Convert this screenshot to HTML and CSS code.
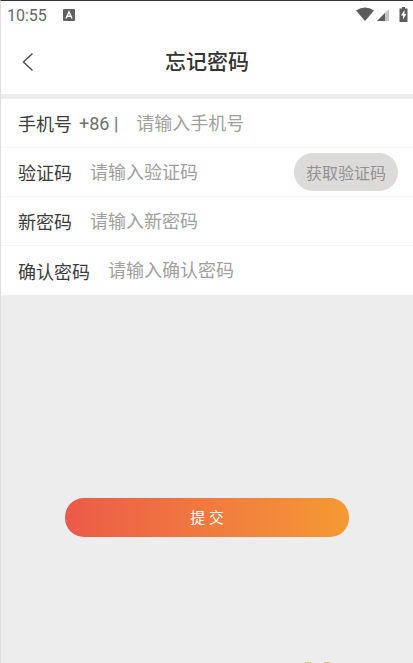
FILE: index.html
```html
<!DOCTYPE html>
<html lang="zh-CN">
<head>
<meta charset="utf-8">
<meta name="viewport" content="width=device-width, initial-scale=1">
<title>忘记密码</title>
<link rel="stylesheet" href="styles.css">
</head>
<body>
<div class="status">
  <span class="clock">10:55</span>
  <svg class="badge" width="12" height="12" viewBox="0 0 12 12" aria-hidden="true"><rect width="12" height="12" rx="1" fill="#616161"/><path d="M3 9.500 6 2.800 9 9.500M4.200 7.200H7.800" fill="none" stroke="#fff" stroke-width="1.400"/></svg>
  <svg class="signals" width="52" height="16" viewBox="0 0 52 16" aria-hidden="true">
    <path d="M0 3.500Q9 -2.500 18 3.500L9 14Z" fill="#5c5c5c"/>
    <path d="M21 14 33 2V14Z" fill="#c4c4c4"/>
    <path d="M21 14 29 6V14Z" fill="#5c5c5c"/>
    <path d="M45 1.500H46V0H49V1.500H51.500V15H43.500V1.500Z" fill="#5c5c5c"/>
    <path d="M48.500 3 45 8.500H47V12.500L50.300 7H48.500Z" fill="#fff"/>
  </svg>
</div>
<header class="header">
  <button class="back" type="button" aria-label="返回"><svg width="12" height="20" viewBox="0 0 12 20" aria-hidden="true"><path d="M10.500 1.500 1.500 10 10.500 18.500" fill="none" stroke="#505050" stroke-width="1.500"/></svg></button>
  <h1 class="title">忘记密码</h1>
</header>
<form class="form">
  <div class="fields">
    <div class="row">
      <label class="label" for="phone">手机号</label>
      <span class="prefix">+86 |</span>
      <input class="input" id="phone" type="tel" placeholder="请输入手机号">
    </div>
    <div class="row">
      <label class="label" for="code">验证码</label>
      <input class="input" id="code" type="text" placeholder="请输入验证码">
      <button class="send" type="button">获取验证码</button>
    </div>
    <div class="row">
      <label class="label" for="pass">新密码</label>
      <input class="input" id="pass" type="password" placeholder="请输入新密码">
    </div>
    <div class="row">
      <label class="label" for="confirm">确认密码</label>
      <input class="input" id="confirm" type="password" placeholder="请输入确认密码">
    </div>
  </div>
  <button class="submit" type="submit">提 交</button>
</form>
<svg class="peek" width="28" height="2" viewBox="0 0 28 2" aria-hidden="true"><path d="M2 2V1H8V2ZM21 2V1H27V2Z" fill="#e3c976"/></svg>
</body>
</html>
```
FILE: styles.css
```css
* { box-sizing: border-box; }

body {
  margin: 0;
  min-height: 100vh;
  display: flex;
  flex-direction: column;
  background: #ededed;
  border-top: 1px solid #333;
  border-left: 1px solid #dedede;
  font-family: Roboto, "Noto Sans CJK SC", sans-serif;
  font-size: 18px;
  color: #3c3c3c;
}

button, input { font: inherit; border: 0; padding: 0; }

.status {
  display: flex;
  align-items: center;
  height: 28px;
  padding: 0 5px 0 6px;
  background: #fff;
}

.clock {
  font-size: 16px;
  color: #666;
}

.badge { margin-left: 16px; }

.signals { margin-left: auto; }

.header {
  display: grid;
  grid-template-columns: 54px 1fr 54px;
  align-items: center;
  height: 65px;
  background: #fff;
}

.back {
  height: 44px;
  background: none;
}

.back svg { display: block; margin: 0 auto; }

.title {
  margin: 0;
  padding-bottom: 4px;
  font-family: "Noto Sans CJK SC", sans-serif;
  font-size: 21px;
  font-weight: 500;
  line-height: 30px;
  text-align: center;
  color: #333;
}

.form {
  display: flex;
  flex-direction: column;
}

.fields {
  margin-top: 5px;
  background: #fff;
}

.row {
  display: flex;
  align-items: center;
  height: 49px;
  padding: 0 15px 0 17px;
  border-bottom: 1px solid #f6f6f6;
}

.row:last-child { border-bottom: 0; }

.prefix {
  margin-left: 7px;
  color: #707070;
}

.input {
  flex: 1;
  min-width: 0;
  height: 40px;
  margin-left: 18px;
  background: none;
  outline: 0;
}

.input::placeholder {
  color: #a0a0a0;
  opacity: 1;
}

.send {
  height: 38px;
  padding: 0 12px;
  border-radius: 19px;
  background: #dcdbda;
  color: #929292;
  font-size: 16px;
}

.submit {
  height: 39px;
  margin: 203px 64px 0;
  padding-bottom: 3px;
  border-radius: 19px;
  background: linear-gradient(90deg, #ec5a49, #f59a33);
  color: #fff;
  font-size: 15px;
}

.peek {
  margin: auto 82px 0 auto;
  flex: none;
}
```
